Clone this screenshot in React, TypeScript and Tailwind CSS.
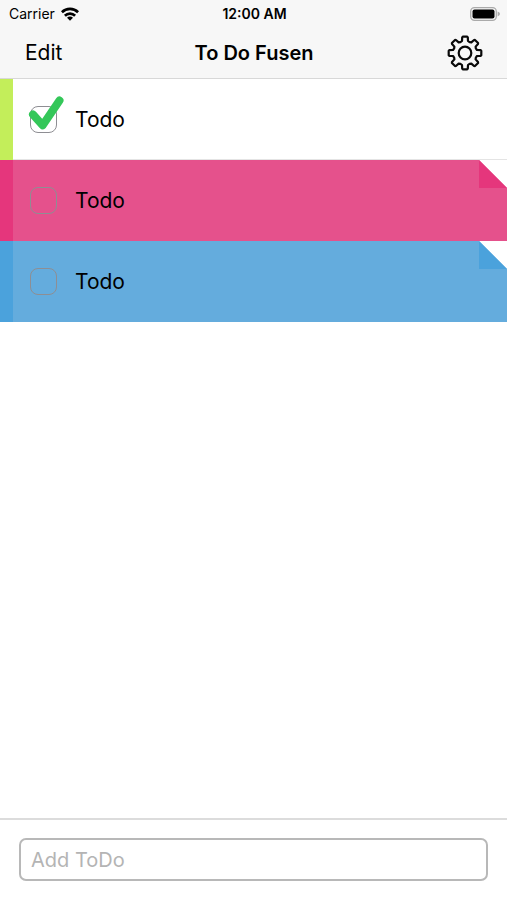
import { useState } from "react";

type Todo = {
  id: number;
  label: string;
  done: boolean;
  edge: string;
  paper: string;
  fold?: string;
};

const initialTodos: Todo[] = [
  { id: 1, label: "Todo", done: true, edge: "bg-[#c3ee5a]", paper: "bg-white" },
  { id: 2, label: "Todo", done: false, edge: "bg-[#e5367c]", paper: "bg-[#e5518c]", fold: "#e5367c" },
  { id: 3, label: "Todo", done: false, edge: "bg-[#4ba2dc]", paper: "bg-[#64acdd]", fold: "#4ba2dc" },
];

/** Outline of an eight-toothed cog, centred on the origin. */
function cogPath() {
  const tooth: [number, number][] = [
    [-4.3, -11],
    [-3, -12],
    [-2.8, -15.6],
    [-2.2, -16.3],
    [2.2, -16.3],
    [2.8, -15.6],
    [3, -12],
    [4.3, -11],
  ];
  const points: string[] = [];
  for (let k = 0; k < 8; k++) {
    const a = (k * Math.PI) / 4;
    for (const [x, y] of tooth) {
      const px = x * Math.cos(a) - y * Math.sin(a);
      const py = x * Math.sin(a) + y * Math.cos(a);
      points.push(`${px.toFixed(2)} ${py.toFixed(2)}`);
    }
  }
  return `M${points.join("L")}Z`;
}

function GearIcon() {
  return (
    <svg className="size-9" viewBox="-18 -18 36 36" fill="none" stroke="#0a0a0a" strokeWidth="2.2" strokeLinejoin="round" aria-hidden="true">
      <path d={cogPath()} />
      <circle r="6.3" />
    </svg>
  );
}

function WifiIcon() {
  return (
    <svg className="h-[14px] w-[18px]" viewBox="0 0 18 14" fill="none" stroke="#000" strokeWidth="2.7" aria-hidden="true">
      <path d="M.9 5.2a11.5 11.5 0 0 1 16.2 0" />
      <path d="M3.9 8.7a7.2 7.2 0 0 1 10.2 0" />
      <path d="M9 13.8 6 10.8a4.2 4.2 0 0 1 6 0Z" fill="#000" stroke="none" />
    </svg>
  );
}

function BatteryIcon() {
  return (
    <svg className="h-[14px] w-[30px]" viewBox="0 0 30 14" aria-hidden="true">
      <rect x=".7" y=".7" width="25.6" height="12.6" rx="3.8" fill="#f7f7f7" stroke="#aaa" strokeWidth="1.3" />
      <rect x="2.5" y="2.5" width="22" height="9" rx="2" fill="#000" />
      <path d="M27.6 4.6q2.4 1 2.4 2.4t-2.4 2.4Z" fill="#aaa" />
    </svg>
  );
}

function TodoRow({ todo, onToggle }: { todo: Todo; onToggle: () => void }) {
  return (
    <li className={`relative flex h-[81px] ${todo.paper}`}>
      <span className={`w-[13px] shrink-0 ${todo.edge}`} />
      <label
        className={`flex flex-1 items-center gap-[18px] pl-[17px] text-[21px] leading-7 ${todo.fold ? "" : "shadow-[inset_0_-1px_#e4e4e4]"}`}
      >
        <span className="relative size-[27px]">
          <input
            type="checkbox"
            checked={todo.done}
            onChange={onToggle}
            className="block size-[27px] appearance-none rounded-[8px] border border-[#8e8e93]"
          />
          {todo.done && (
            <svg className="pointer-events-none absolute bottom-0 left-0 h-9 w-[27px] overflow-visible" viewBox="0 0 27 36" fill="none" stroke="#34c759" strokeWidth="8" strokeLinecap="round" strokeLinejoin="round" aria-hidden="true">
              <path d="M3 17.5 12.7 28.3 29.5 3.5" />
            </svg>
          )}
        </span>
        {todo.label}
      </label>
      {todo.fold && (
        <svg className="absolute top-0 right-0 size-7" viewBox="0 0 28 28" aria-hidden="true">
          <path d="M0 0h28v28Z" fill="#fff" />
          <path d="M0 0v28h28Z" fill={todo.fold} />
        </svg>
      )}
    </li>
  );
}

export default function App() {
  const [todos, setTodos] = useState(initialTodos);
  const [draft, setDraft] = useState("");

  const toggle = (id: number) =>
    setTodos(todos.map((t) => (t.id === id ? { ...t, done: !t.done } : t)));

  return (
    <div className="flex min-h-screen flex-col bg-white font-[Inter,'Liberation_Sans',sans-serif] text-black">
      <header className="border-b border-[#d8d8d8] bg-[#f7f7f7]">
        <div className="grid h-[27px] grid-cols-3 items-center pr-[7px] pl-[9px] text-[14px] leading-4">
          <span className="flex items-center gap-[6px]">
            Carrier
            <WifiIcon />
          </span>
          <span className="text-center font-semibold">12:00 AM</span>
          <span className="flex justify-end">
            <BatteryIcon />
          </span>
        </div>
        <nav className="grid h-[51px] grid-cols-[1fr_auto_1fr] items-center pr-6 pl-[25px]">
          <button type="button" className="justify-self-start text-[21px] leading-6">Edit</button>
          <h1 className="text-[20px] leading-6 font-semibold">To Do Fusen</h1>
          <button type="button" aria-label="Settings" className="justify-self-end">
            <GearIcon />
          </button>
        </nav>
      </header>

      <ul className="flex-1">
        {todos.map((todo) => (
          <TodoRow key={todo.id} todo={todo} onToggle={() => toggle(todo.id)} />
        ))}
      </ul>

      <form className="border-t-2 border-[#dcdcdc] px-[19px] pt-[18px] pb-[19px]" onSubmit={(e) => e.preventDefault()}>
        <input
          type="text"
          aria-label="Add ToDo"
          placeholder="Add ToDo"
          value={draft}
          onChange={(e) => setDraft(e.target.value)}
          className="block h-[43px] w-full rounded-[7px] border-2 border-[#b8b8b8] bg-white px-[10px] text-[20px] leading-6 placeholder:text-[#b4b4b4]"
        />
      </form>
    </div>
  );
}
